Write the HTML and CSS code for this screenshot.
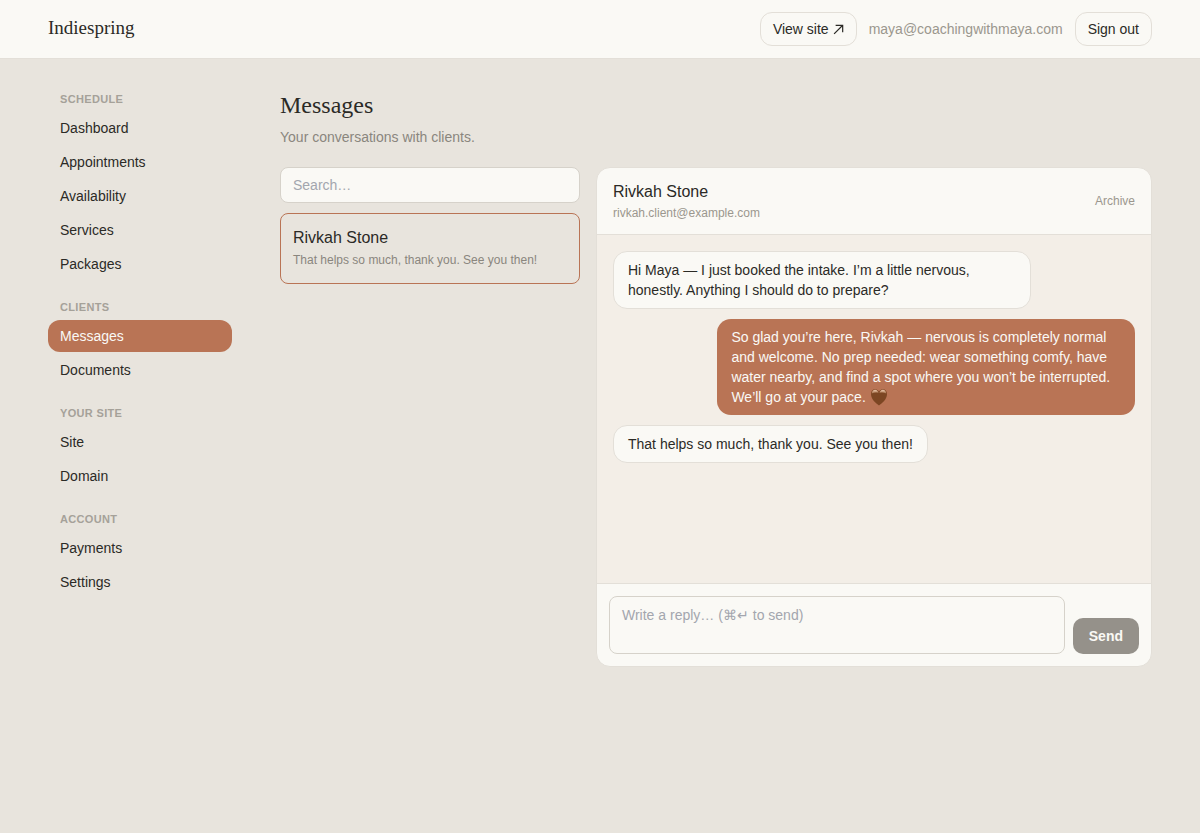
FILE: index.html
```html
<!DOCTYPE html>
<html lang="en">
<head>
<meta charset="utf-8">
<meta name="viewport" content="width=device-width, initial-scale=1">
<title>Messages · Indiespring</title>
<link rel="stylesheet" href="styles.css">
</head>
<body>
<header class="topbar">
  <a class="brand" href="#">Indiespring</a>
  <div class="topbar-actions">
    <a class="pill" href="#">View site
      <svg class="arrow" viewBox="0 0 10 10" aria-hidden="true"><path d="M1 9 8.6 1.400M2.400 1.200h6.400v6.400"/></svg>
    </a>
    <span class="account">maya@coachingwithmaya.com</span>
    <button class="pill" type="button">Sign out</button>
  </div>
</header>
<div class="shell">
  <nav class="sidebar" aria-label="Main">
    <section class="nav-group">
      <h2 class="nav-label">Schedule</h2>
      <a class="nav-link" href="#">Dashboard</a>
      <a class="nav-link" href="#">Appointments</a>
      <a class="nav-link" href="#">Availability</a>
      <a class="nav-link" href="#">Services</a>
      <a class="nav-link" href="#">Packages</a>
    </section>
    <section class="nav-group">
      <h2 class="nav-label">Clients</h2>
      <a class="nav-link nav-link-active" href="#" aria-current="page">Messages</a>
      <a class="nav-link" href="#">Documents</a>
    </section>
    <section class="nav-group">
      <h2 class="nav-label">Your site</h2>
      <a class="nav-link" href="#">Site</a>
      <a class="nav-link" href="#">Domain</a>
    </section>
    <section class="nav-group">
      <h2 class="nav-label">Account</h2>
      <a class="nav-link" href="#">Payments</a>
      <a class="nav-link" href="#">Settings</a>
    </section>
  </nav>
  <main class="content">
    <h1 class="title">Messages</h1>
    <p class="subtitle">Your conversations with clients.</p>
    <div class="inbox">
      <div class="conversations">
        <input class="search" type="search" placeholder="Search…" aria-label="Search conversations">
        <button class="conversation" type="button">
          <span class="name">Rivkah Stone</span>
          <span class="preview">That helps so much, thank you. See you then!</span>
        </button>
      </div>
      <section class="thread" aria-label="Conversation with Rivkah Stone">
        <header class="thread-header">
          <div>
            <div class="name">Rivkah Stone</div>
            <div class="email">rivkah.client@example.com</div>
          </div>
          <button class="archive" type="button">Archive</button>
        </header>
        <div class="log">
          <p class="bubble">Hi Maya — I just booked the intake. I’m a little nervous, honestly. Anything I should do to prepare?</p>
          <p class="bubble bubble-own">So glad you’re here, Rivkah — nervous is completely normal and welcome. No prep needed: wear something comfy, have water nearby, and find a spot where you won’t be interrupted. We’ll go at your pace.
            <svg class="heart" viewBox="0 0 18 18" role="img" aria-label="brown heart">
              <defs><linearGradient id="shine" x1="0" y1="0" x2="0" y2="1"><stop offset="0" stop-color="#f0cdb2"/><stop offset="1" stop-color="#a06a44"/></linearGradient></defs>
              <path fill="#7c4623" d="M9 17.400C6 15 1 11.300 1 5.900 1 3 2.800 1.200 5.100 1.200c1.800 0 3.200 1 3.900 2.600.7-1.600 2.100-2.600 3.900-2.600C15.200 1.200 17 3 17 5.900 17 11.300 12 15 9 17.400Z"/>
              <path fill="url(#shine)" d="M1.800 5.600C1.800 3 3.400 1.700 5.100 1.700 6.900 1.700 8.100 3 8.500 5 6.300 4.400 4.300 4.400 1.800 5.600ZM16.200 5.600C16.200 3 14.600 1.700 12.900 1.700c-1.800 0-3 1.300-3.400 3.300 2.200-.6 4.200-.6 6.700.6Z"/>
            </svg>
          </p>
          <p class="bubble">That helps so much, thank you. See you then!</p>
        </div>
        <form class="composer">
          <textarea class="reply" rows="2" placeholder="Write a reply… (⌘↵ to send)" aria-label="Reply"></textarea>
          <button class="send" type="submit" disabled>Send</button>
        </form>
      </section>
    </div>
  </main>
</div>
</body>
</html>
```
FILE: styles.css
```css
:root {
  --canvas: #e8e4dd;
  --surface: #faf9f5;
  --sand: #f3eee7;
  --line: #e3dfd8;
  --field-line: #d6d2ca;
  --ink: #2b2a26;
  --muted: #8a867e;
  --faint: #9b978e;
  --clay: #b97455;
}

* {
  box-sizing: border-box;
}

body {
  margin: 0;
  min-height: 100vh;
  background: var(--canvas);
  color: var(--ink);
  font: 14px/20px "Liberation Sans", Helvetica, Arial, sans-serif;
}

button,
input,
textarea {
  font: inherit;
  color: inherit;
}

a {
  color: inherit;
  text-decoration: none;
}

h1,
h2,
p {
  margin: 0;
}

.topbar {
  display: flex;
  align-items: center;
  justify-content: space-between;
  padding: 12px 48px;
  background: var(--surface);
  border-bottom: 1px solid var(--line);
}

.brand {
  align-self: flex-start;
  font: 19px/32px "Liberation Serif", Georgia, serif;
}

.topbar-actions {
  display: flex;
  align-items: center;
  gap: 12px;
}

.pill {
  display: flex;
  align-items: center;
  gap: 4px;
  padding: 6px 12px;
  background: transparent;
  border: 1px solid var(--line);
  border-radius: 12px;
}

.arrow {
  width: 11px;
  height: 11px;
  fill: none;
  stroke: currentColor;
  stroke-width: 1.1;
}

.account {
  color: var(--faint);
}

.shell {
  display: grid;
  grid-template-columns: 184px minmax(0, 1fr);
  gap: 48px;
  padding: 32px 48px;
}

.sidebar {
  display: flex;
  flex-direction: column;
  gap: 19px;
}

.nav-group {
  display: flex;
  flex-direction: column;
  gap: 2px;
}

.nav-label {
  padding: 0 12px 3px;
  color: #a5a199;
  font-size: 11px;
  line-height: 16px;
  letter-spacing: 0.03em;
  text-transform: uppercase;
}

.nav-link {
  padding: 6px 12px;
  border-radius: 12px;
}

.nav-link-active {
  background: var(--clay);
  color: var(--surface);
}

.title {
  margin-bottom: 8px;
  font: 24px/28px "Liberation Serif", Georgia, serif;
}

.subtitle {
  margin-bottom: 20px;
  color: var(--muted);
}

.inbox {
  display: grid;
  grid-template-columns: 300px minmax(0, 1fr);
  gap: 16px;
}

.conversations {
  display: flex;
  flex-direction: column;
  gap: 10px;
}

.search {
  width: 100%;
  padding: 7px 12px;
  background: var(--surface);
  border: 1px solid var(--field-line);
  border-radius: 8px;
  appearance: none;
}

.search::placeholder,
.reply::placeholder {
  color: #a3a6ae;
  opacity: 1;
}

.conversation {
  display: flex;
  flex-direction: column;
  padding: 12px;
  background: transparent;
  border: 1px solid var(--clay);
  border-radius: 8px;
  text-align: left;
}

.name {
  font-size: 16px;
  line-height: 24px;
}

.preview {
  color: var(--muted);
  font-size: 12px;
  line-height: 21px;
}

.thread {
  display: flex;
  flex-direction: column;
  min-height: 500px;
  overflow: hidden;
  background: var(--surface);
  border: 1px solid var(--line);
  border-radius: 14px;
}

.thread-header {
  display: flex;
  align-items: center;
  justify-content: space-between;
  padding: 12px 16px;
  border-bottom: 1px solid var(--line);
}

.email {
  color: var(--faint);
  font-size: 12px;
  line-height: 18px;
}

.archive {
  padding: 0;
  background: transparent;
  border: 0;
  color: var(--faint);
  font-size: 12px;
}

.log {
  display: flex;
  flex: 1;
  flex-direction: column;
  align-items: flex-start;
  gap: 10px;
  padding: 16px;
  background: var(--sand);
}

.bubble {
  max-width: 80%;
  padding: 8px 14px;
  background: var(--surface);
  border: 1px solid var(--line);
  border-radius: 14px;
}

.bubble-own {
  align-self: flex-end;
  background: var(--clay);
  border: 0;
  color: var(--surface);
}

.heart {
  width: 18px;
  height: 18px;
  margin: -4px 0 0;
  vertical-align: -4px;
}

.composer {
  display: flex;
  align-items: flex-end;
  gap: 8px;
  padding: 12px;
  border-top: 1px solid var(--line);
}

.reply {
  display: block;
  flex: 1;
  min-width: 0;
  padding: 8px 12px;
  background: transparent;
  border: 1px solid var(--field-line);
  border-radius: 8px;
  resize: none;
}

.send {
  padding: 8px 16px;
  background: #95918a;
  border: 0;
  border-radius: 10px;
  color: var(--surface);
  font-weight: 700;
}
```
